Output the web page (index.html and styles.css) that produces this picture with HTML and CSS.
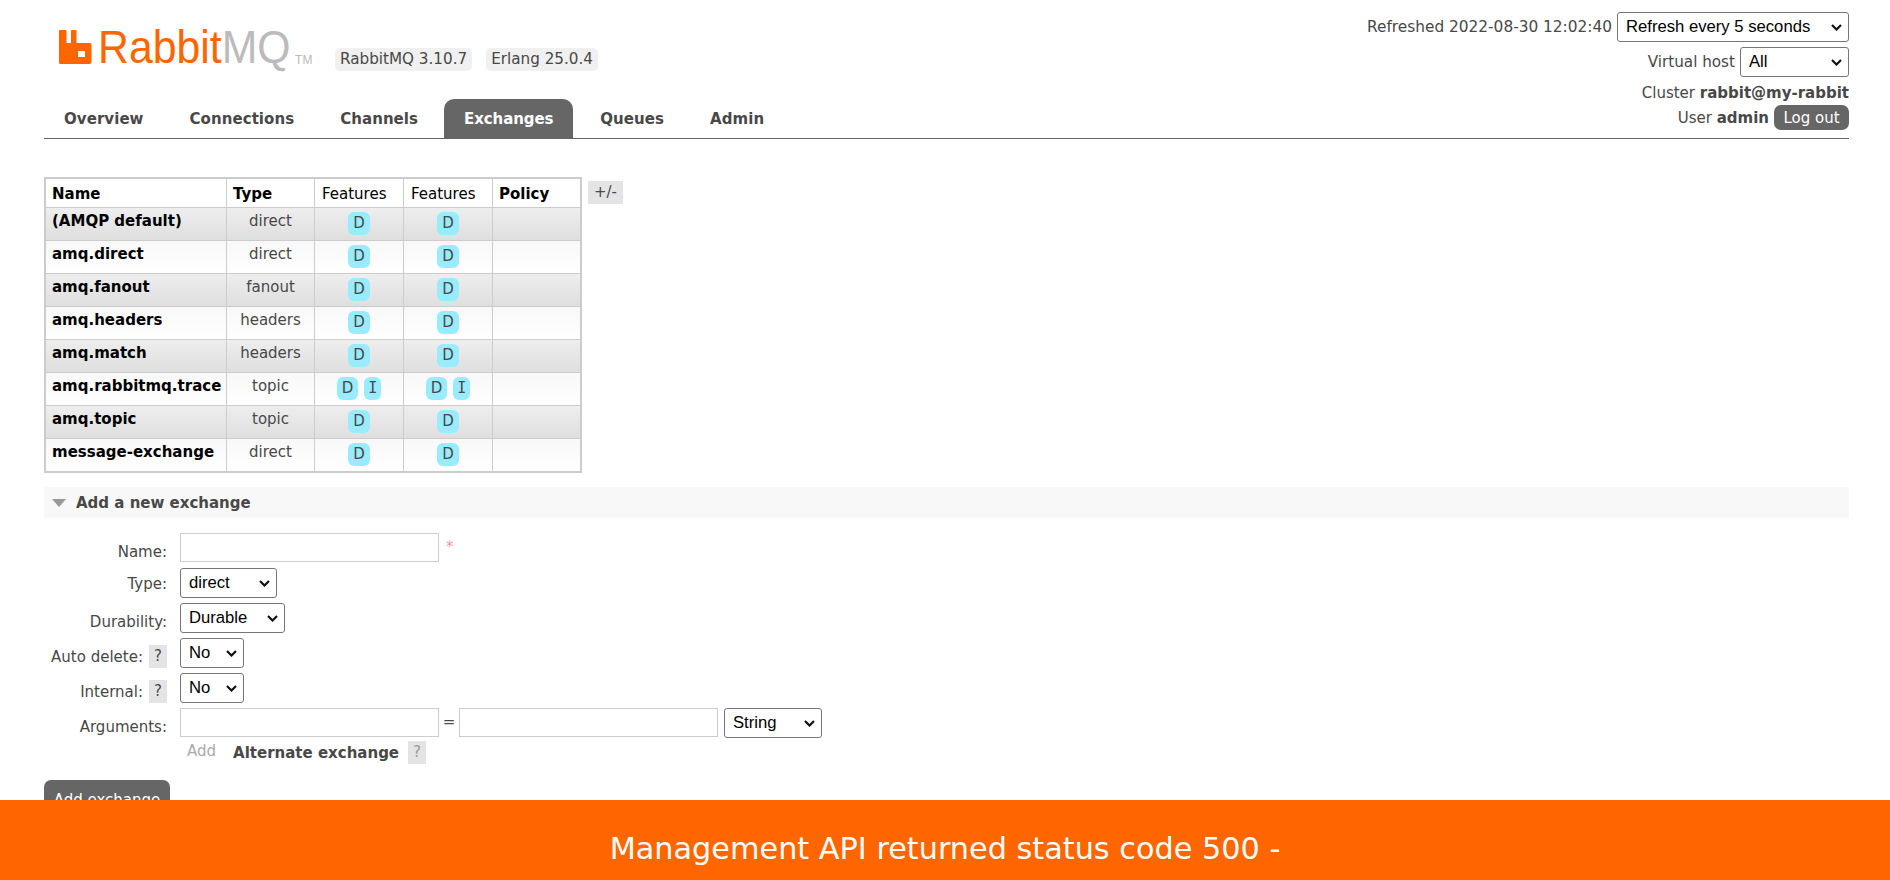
FILE: index.html
```html
<!DOCTYPE html>
<html lang="en">
<head>
  <meta charset="UTF-8">
  <title>RabbitMQ Management</title>
  <link rel="stylesheet" href="styles.css">
</head>
<body>
  <div class="header">
    <div class="header-left">
      <div class="brand">
        <div class="logo">
          <svg class="logo-icon" width="33" height="34" viewBox="0 0 33 34">
            <path fill="#f60" fill-rule="evenodd" d="M1 0h5.500a1 1 0 0 1 1 1v12h4.500V1a1 1 0 0 1 1-1h3.500a1 1 0 0 1 1 1v12h13a2 2 0 0 1 2 2v17a2 2 0 0 1-2 2H1.500a1.500 1.500 0 0 1-1.500-1.500V1a1 1 0 0 1 1-1zM19 21v6h7v-6z"/>
          </svg>
          <span class="logo-text">Rabbit<span class="logo-mq">MQ</span></span>
          <span class="logo-tm">TM</span>
        </div>
        <span class="version">RabbitMQ 3.10.7</span>
        <span class="version">Erlang 25.0.4</span>
      </div>
      <ul class="tabs">
        <li>Overview</li>
        <li>Connections</li>
        <li>Channels</li>
        <li class="active">Exchanges</li>
        <li>Queues</li>
        <li>Admin</li>
      </ul>
    </div>
    <div class="header-right">
      <div class="status-row status-refresh">
        <span>Refreshed 2022-08-30 12:02:40</span>
        <select class="select-refresh"><option>Refresh every 5 seconds</option></select>
      </div>
      <div class="status-row status-vhost">
        <span>Virtual host</span>
        <select class="select-vhost"><option>All</option></select>
      </div>
      <div class="status-row status-cluster">
        <span>Cluster <b>rabbit@my-rabbit</b></span>
      </div>
      <div class="status-row status-user">
        <span>User <b>admin</b></span>
        <button class="btn-logout">Log out</button>
      </div>
    </div>
  </div>

  <div class="table-wrap">
    <table class="list">
      <thead>
        <tr>
          <th class="col-name">Name</th>
          <th class="col-type">Type</th>
          <th class="col-feat plain">Features</th>
          <th class="col-feat plain">Features</th>
          <th class="col-policy">Policy</th>
        </tr>
      </thead>
      <tbody>
        <tr class="alt1"><td class="name">(AMQP default)</td><td class="type">direct</td><td class="feat"><abbr>D</abbr></td><td class="feat"><abbr>D</abbr></td><td></td></tr>
        <tr class="alt2"><td class="name">amq.direct</td><td class="type">direct</td><td class="feat"><abbr>D</abbr></td><td class="feat"><abbr>D</abbr></td><td></td></tr>
        <tr class="alt1"><td class="name">amq.fanout</td><td class="type">fanout</td><td class="feat"><abbr>D</abbr></td><td class="feat"><abbr>D</abbr></td><td></td></tr>
        <tr class="alt2"><td class="name">amq.headers</td><td class="type">headers</td><td class="feat"><abbr>D</abbr></td><td class="feat"><abbr>D</abbr></td><td></td></tr>
        <tr class="alt1"><td class="name">amq.match</td><td class="type">headers</td><td class="feat"><abbr>D</abbr></td><td class="feat"><abbr>D</abbr></td><td></td></tr>
        <tr class="alt2"><td class="name">amq.rabbitmq.trace</td><td class="type">topic</td><td class="feat"><abbr>D</abbr><abbr class="flag-i">I</abbr></td><td class="feat"><abbr>D</abbr><abbr class="flag-i">I</abbr></td><td></td></tr>
        <tr class="alt1"><td class="name">amq.topic</td><td class="type">topic</td><td class="feat"><abbr>D</abbr></td><td class="feat"><abbr>D</abbr></td><td></td></tr>
        <tr class="alt2"><td class="name">message-exchange</td><td class="type">direct</td><td class="feat"><abbr>D</abbr></td><td class="feat"><abbr>D</abbr></td><td></td></tr>
      </tbody>
    </table>
    <span class="plus-minus">+/-</span>
  </div>

  <h2 class="section-title"><span class="triangle"></span>Add a new exchange</h2>

  <form class="add-form">
    <label class="form-label">Name:</label>
    <div class="form-field"><input class="text-input" type="text"><span class="required">*</span></div>

    <label class="form-label form-label-high">Type:</label>
    <div class="form-field"><select class="select-type"><option>direct</option></select></div>

    <label class="form-label">Durability:</label>
    <div class="form-field"><select class="select-durability"><option>Durable</option></select></div>

    <label class="form-label form-label-help">Auto delete: <span class="help">?</span></label>
    <div class="form-field"><select class="select-bool"><option>No</option></select></div>

    <label class="form-label form-label-help">Internal: <span class="help">?</span></label>
    <div class="form-field"><select class="select-bool"><option>No</option></select></div>

    <label class="form-label">Arguments:</label>
    <div class="form-field">
      <input class="text-input" type="text"><span class="equals">=</span><input class="text-input" type="text">
      <select class="select-string"><option>String</option></select>
    </div>

    <div></div>
    <div class="form-field arg-links">
      <span class="add-link">Add</span>
      <b class="alt-link">Alternate exchange</b>
      <span class="help help-faded">?</span>
    </div>
  </form>

  <button class="btn-add">Add exchange</button>

  <div class="error-bar">Management API returned status code 500 -</div>
</body>
</html>
```

FILE: styles.css
```css
/* General Reset */
* {
  margin: 0;
  padding: 0;
  box-sizing: border-box;
}

body {
  padding: 0 41px 0 44px;
  font-family: "DejaVu Sans", Verdana, sans-serif;
  font-size: 15px;
  color: #484848;
  background: white;
}

select {
  appearance: none;
  font-family: "Liberation Sans", Arial, sans-serif;
  font-size: 16.67px;
  height: 30px;
  padding: 0 0 2px 8px;
  color: black;
  background: white url("data:image/svg+xml,%3Csvg xmlns='http://www.w3.org/2000/svg' width='11' height='7'%3E%3Cpath d='M1 1l4.500 4.500L10 1' fill='none' stroke='%23111' stroke-width='2.200'/%3E%3C/svg%3E") no-repeat right 6px center;
  border: 1px solid #767676;
  border-radius: 3px;
}

/* Header */
.header {
  display: flex;
  justify-content: space-between;
  height: 139px;
  border-bottom: 1px solid #666;
}

.header-left {
  display: flex;
  flex-direction: column;
  justify-content: space-between;
}

.brand {
  display: flex;
  align-items: flex-start;
  padding: 22px 0 0 15px;
}

.logo {
  display: flex;
  align-items: flex-start;
  width: 276px;
}

.logo-icon {
  margin-top: 8px;
}

.logo-text {
  font-family: "Liberation Sans", Arial, sans-serif;
  font-size: 46px;
  line-height: 50px;
  margin: 0 -15px 0 6px;
  color: #f60;
  transform: scaleX(0.93);
  transform-origin: left;
}

.logo-mq {
  color: #bbb;
}

.logo-tm {
  font-family: "Liberation Sans", Arial, sans-serif;
  font-size: 12px;
  color: #bbb;
  margin: 31px 0 0 5px;
}

.version {
  margin: 26px 14px 0 0;
  padding: 0 5px;
  height: 23px;
  line-height: 23px;
  font-size: 15.2px;
  background: #f0f0f0;
  border-radius: 5px;
}

.tabs {
  display: flex;
  gap: 6px;
  list-style: none;
}

.tabs li {
  padding: 0 20px;
  height: 39px;
  line-height: 41px;
  font-weight: bold;
  letter-spacing: 0.06px;
  border-radius: 10px 10px 0 0;
}

.tabs li.active {
  margin-right: 1px;
  letter-spacing: -0.1px;
  background: #666;
  color: white;
}

.header-right {
  display: flex;
  flex-direction: column;
  align-items: flex-end;
  padding-top: 12px;
}

.status-row {
  display: flex;
  align-items: center;
  gap: 5px;
}

.status-refresh {
  font-size: 15.35px;
}

.status-vhost {
  margin-top: 5px;
  font-size: 15.2px;
}

.status-cluster {
  margin-top: 7px;
}

.status-user {
  margin-top: 3px;
}

.select-refresh {
  width: 232px;
}

.select-vhost {
  width: 109px;
}

.btn-logout {
  font-family: inherit;
  font-size: 15px;
  width: 75px;
  height: 25px;
  color: white;
  background: #666;
  border: none;
  border-radius: 7px;
}

/* Exchanges table */
.table-wrap {
  display: flex;
  align-items: flex-start;
  margin-top: 38px;
}

.list {
  width: 538px;
  table-layout: fixed;
  border-collapse: separate;
  border-spacing: 0;
  border: 2px solid #ccc;
  border-right-width: 1px;
  border-bottom-width: 1px;
}

.list th,
.list td {
  border-right: 1px solid #ccc;
  border-bottom: 1px solid #ccc;
}

.list th {
  height: 29px;
  padding: 2px 6px 0;
  text-align: left;
  color: black;
  font-size: 15px;
  background: white;
}

.list th.plain {
  font-weight: normal;
  padding: 2px 6px 0 7px;
}

.col-name { width: 181px; }
.col-type { width: 88px; }
.col-feat { width: 89px; }
.col-policy { width: 88px; }

.list td {
  height: 33px;
  padding: 0 6px 6px;
}

.list td.name {
  font-weight: bold;
  color: black;
  white-space: nowrap;
}

.list td.type {
  text-align: center;
}

.list td.feat {
  padding: 0 0 2px;
  text-align: center;
}

.alt1 {
  background: linear-gradient(#eee, #dedede);
}

.alt2 {
  background: linear-gradient(#f8f8f8, #fff);
}

abbr {
  display: inline-block;
  padding: 0 5px;
  margin: 0 3px;
  height: 23px;
  line-height: 23px;
  text-align: center;
  background: #99ebff;
  border-radius: 6px;
}

abbr.flag-i {
  font-family: "DejaVu Sans Mono", monospace;
  padding: 0 4px;
}

.plus-minus {
  margin: 4px 0 0 6px;
  padding: 0 6px;
  height: 23px;
  line-height: 23px;
  color: #484848;
  background: #e4e4e4;
}

/* Add form */
.section-title {
  display: flex;
  align-items: center;
  margin-top: 14px;
  height: 31px;
  padding-left: 8px;
  font-size: 15px;
  color: #484848;
  background: #f8f8f8;
}

.triangle {
  width: 0;
  height: 0;
  margin-right: 10px;
  border-left: 7px solid transparent;
  border-right: 7px solid transparent;
  border-top: 8px solid #999;
}

.add-form {
  display: grid;
  grid-template-columns: 123px 1fr;
  grid-auto-rows: 30px;
  column-gap: 13px;
  row-gap: 5px;
  margin-top: 15px;
}

.form-label {
  display: flex;
  align-items: center;
  justify-content: flex-end;
  gap: 6px;
  padding-top: 8px;
  font-size: 15px;
  color: #484848;
}

.form-label-high {
  padding-top: 2px;
}

.form-label-help {
  padding-top: 7px;
}

.form-field {
  display: flex;
  align-items: flex-start;
}

.text-input {
  width: 259px;
  height: 29px;
  border: 1px solid #ccc;
  background: white;
}

.required {
  margin: 5px 0 0 7px;
  color: #f99;
}

.equals {
  width: 20px;
  line-height: 29px;
  text-align: center;
}

.select-type { width: 97px; }
.select-durability { width: 105px; }
.select-bool { width: 64px; }
.select-string { width: 98px; margin-left: 6px; }

.help {
  display: inline-block;
  width: 18px;
  height: 23px;
  line-height: 23px;
  text-align: center;
  background: #e4e4e4;
}

.help-faded {
  color: #999;
}

.arg-links {
  height: 23px;
  margin-top: -2px;
  align-items: center;
  align-self: start;
}

.add-link {
  margin: 0 17px 4px 7px;
  color: #aaa;
}

.alt-link {
  margin-right: 9px;
}

.btn-add {
  display: block;
  margin-top: 7px;
  padding-top: 4px;
  width: 126px;
  height: 35px;
  font-family: inherit;
  font-size: 15px;
  color: white;
  background: #666;
  border: none;
  border-radius: 7px;
}

/* Error bar pinned over the page */
.error-bar {
  position: fixed;
  left: 0;
  right: 0;
  bottom: 0;
  height: 80px;
  line-height: 98px;
  overflow: hidden;
  text-align: center;
  font-size: 30.3px;
  color: white;
  background: #f60;
}
```
